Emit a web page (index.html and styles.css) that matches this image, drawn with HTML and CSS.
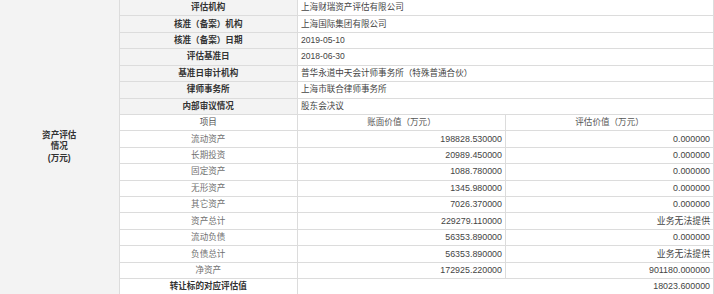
FILE: index.html
```html
<!DOCTYPE html>
<html lang="zh-CN">
<head>
<meta charset="utf-8">
<title>资产评估情况</title>
<link rel="stylesheet" href="styles.css">
</head>
<body>
<div class="wrap">
<table class="info">
  <colgroup>
    <col class="c-group">
    <col class="c-label">
    <col class="c-book">
    <col class="c-eval">
  </colgroup>
  <tbody>
    <tr>
      <td class="group" rowspan="18">资产评估<br>情况<br>(万元)</td>
      <td class="label">评估机构</td>
      <td class="val" colspan="2">上海财瑞资产评估有限公司</td>
    </tr>
    <tr><td class="label">核准（备案）机构</td><td class="val" colspan="2">上海国际集团有限公司</td></tr>
    <tr><td class="label">核准（备案）日期</td><td class="val" colspan="2">2019-05-10</td></tr>
    <tr><td class="label">评估基准日</td><td class="val" colspan="2">2018-06-30</td></tr>
    <tr><td class="label">基准日审计机构</td><td class="val" colspan="2">普华永道中天会计师事务所（特殊普通合伙）</td></tr>
    <tr><td class="label">律师事务所</td><td class="val" colspan="2">上海市联合律师事务所</td></tr>
    <tr><td class="label">内部审议情况</td><td class="val" colspan="2">股东会决议</td></tr>
    <tr class="head">
      <td class="item">项目</td>
      <td class="colhead">账面价值（万元）</td>
      <td class="colhead">评估价值（万元）</td>
    </tr>
    <tr><td class="item">流动资产</td><td class="num">198828.530000</td><td class="num">0.000000</td></tr>
    <tr><td class="item">长期投资</td><td class="num">20989.450000</td><td class="num">0.000000</td></tr>
    <tr><td class="item">固定资产</td><td class="num">1088.780000</td><td class="num">0.000000</td></tr>
    <tr><td class="item">无形资产</td><td class="num">1345.980000</td><td class="num">0.000000</td></tr>
    <tr><td class="item">其它资产</td><td class="num">7026.370000</td><td class="num">0.000000</td></tr>
    <tr><td class="item">资产总计</td><td class="num">229279.110000</td><td class="num">业务无法提供</td></tr>
    <tr><td class="item">流动负债</td><td class="num">56353.890000</td><td class="num">0.000000</td></tr>
    <tr><td class="item">负债总计</td><td class="num">56353.890000</td><td class="num">业务无法提供</td></tr>
    <tr><td class="item">净资产</td><td class="num">172925.220000</td><td class="num">901180.000000</td></tr>
    <tr><td class="item strong">转让标的对应评估值</td><td class="num" colspan="2">18023.600000</td></tr>
  </tbody>
</table>
</div>
</body>
</html>
```

FILE: styles.css
```css
html, body {
  margin: 0;
  padding: 0;
  background: #ffffff;
}

.wrap {
  margin: -1px 0 0 -1px;
  width: 714px;
}

.info {
  border-collapse: collapse;
  table-layout: fixed;
  width: 714px;
  font-family: "Liberation Sans", "Noto Sans CJK SC", sans-serif;
  font-size: 8.57px;
  color: #333333;
}

.c-group { width: 119.5px; }
.c-label { width: 178.5px; }
.c-book { width: 208px; }
.c-eval { width: 208px; }

.info td {
  border: 1px solid #dcdcdc;
  padding: 0 3px;
  height: 15.43px;
  line-height: 11px;
  white-space: nowrap;
  overflow: hidden;
}

.info td.group {
  background: #f3f3f3;
  text-align: center;
  font-weight: bold;
  line-height: 11.7px;
  color: #333333;
  white-space: normal;
}

.info td.label {
  background: #f3f3f3;
  text-align: center;
  font-weight: bold;
  color: #333333;
}

.info td.val {
  text-align: left;
  color: #444444;
}

.info td.item {
  text-align: center;
  color: #707070;
}

.head td.item,
.info td.colhead {
  text-align: center;
  color: #555555;
}

.info td.item.strong {
  font-weight: bold;
  color: #333333;
}

.info td.num {
  text-align: right;
  color: #444444;
  font-size: 8.9px;
}
```
